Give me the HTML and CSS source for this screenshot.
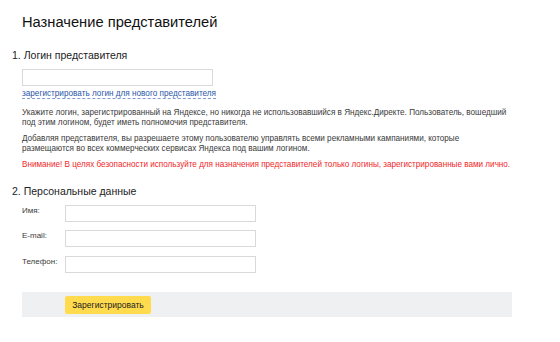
FILE: index.html
```html
<!DOCTYPE html>
<html lang="ru">
<head>
<meta charset="utf-8">
<link rel="stylesheet" href="styles.css">
</head>
<body>
<div class="page">
  <h1 class="title">Назначение представителей</h1>

  <h2 class="section-title">1. Логин представителя</h2>
  <div class="section">
    <input class="field field-login" type="text">
    <div class="link-row"><a class="dashed-link" href="#">зарегистрировать логин для нового представителя</a></div>
    <p class="note">Укажите логин, зарегистрированный на Яндексе, но никогда не использовавшийся в Яндекс.Директе. Пользователь, вошедший под этим логином, будет иметь полномочия представителя.</p>
    <p class="note">Добавляя представителя, вы разрешаете этому пользователю управлять всеми рекламными кампаниями, которые размещаются во всех коммерческих сервисах Яндекса под вашим логином.</p>
    <p class="note warning">Внимание! В целях безопасности используйте для назначения представителей только логины, зарегистрированные вами лично.</p>
  </div>

  <h2 class="section-title section-title-2">2. Персональные данные</h2>
  <div class="section form-grid">
    <label class="label">Имя:</label><input class="field" type="text">
    <label class="label">E-mail:</label><input class="field" type="text">
    <label class="label">Телефон:</label><input class="field" type="text">
  </div>

  <div class="actions">
    <button class="btn" type="button">Зарегистрировать</button>
  </div>
</div>
</body>
</html>
```

FILE: styles.css
```css
* { box-sizing: border-box; }
html, body { margin: 0; padding: 0; background: #fff; }
body {
  font-family: "Liberation Sans", Arial, sans-serif;
  color: #3a3a3a;
}
.page {
  padding: 12px 0 0 22px;
  width: 540px;
}
.title {
  margin: 0;
  font-size: 14.7px;
  line-height: 20px;
  font-weight: normal;
  color: #111;
}
.section-title {
  margin: 16px 0 0 -10px;
  font-size: 10.5px;
  line-height: 14px;
  font-weight: normal;
  color: #222;
}
.section-title-2 { margin-top: 14px; }
.section {
  padding-top: 7px;
}
.field {
  display: block;
  width: 191px;
  height: 17px;
  border: 1px solid #d9d9d9;
  background: #fff;
  margin: 0;
  padding: 0 4px;
  font: inherit;
}
.link-row {
  font-size: 8.2px;
  line-height: 10px;
  margin-top: 3px;
}
.dashed-link {
  color: #2a56a8;
  text-decoration: none;
  border-bottom: 1px dashed #7f9bd0;
}
.note {
  margin: 9px 0 0;
  width: 491px;
  font-size: 8.15px;
  line-height: 9.6px;
  color: #3a3a3a;
}
.note + .note { margin-top: 7px; }
.warning {
  color: #f0282a;
  margin-top: 8px;
  font-size: 8.15px;
  white-space: nowrap;
}
.form-grid {
  display: grid;
  grid-template-columns: 43px 191px;
  row-gap: 8.5px;
  padding-top: 7px;
}
.label {
  font-size: 8px;
  line-height: 10px;
  padding-top: 1px;
  color: #3a3a3a;
}
.actions {
  margin-top: 19px;
  width: 490px;
  height: 25px;
  background: #eff0f1;
  padding: 4px 0 0 43px;
}
.btn {
  display: block;
  height: 18px;
  width: 86px;
  padding: 0;
  border: 0;
  border-radius: 2px;
  background: #ffdb4d;
  font-family: inherit;
  font-size: 8.5px;
  color: #222;
}
```
